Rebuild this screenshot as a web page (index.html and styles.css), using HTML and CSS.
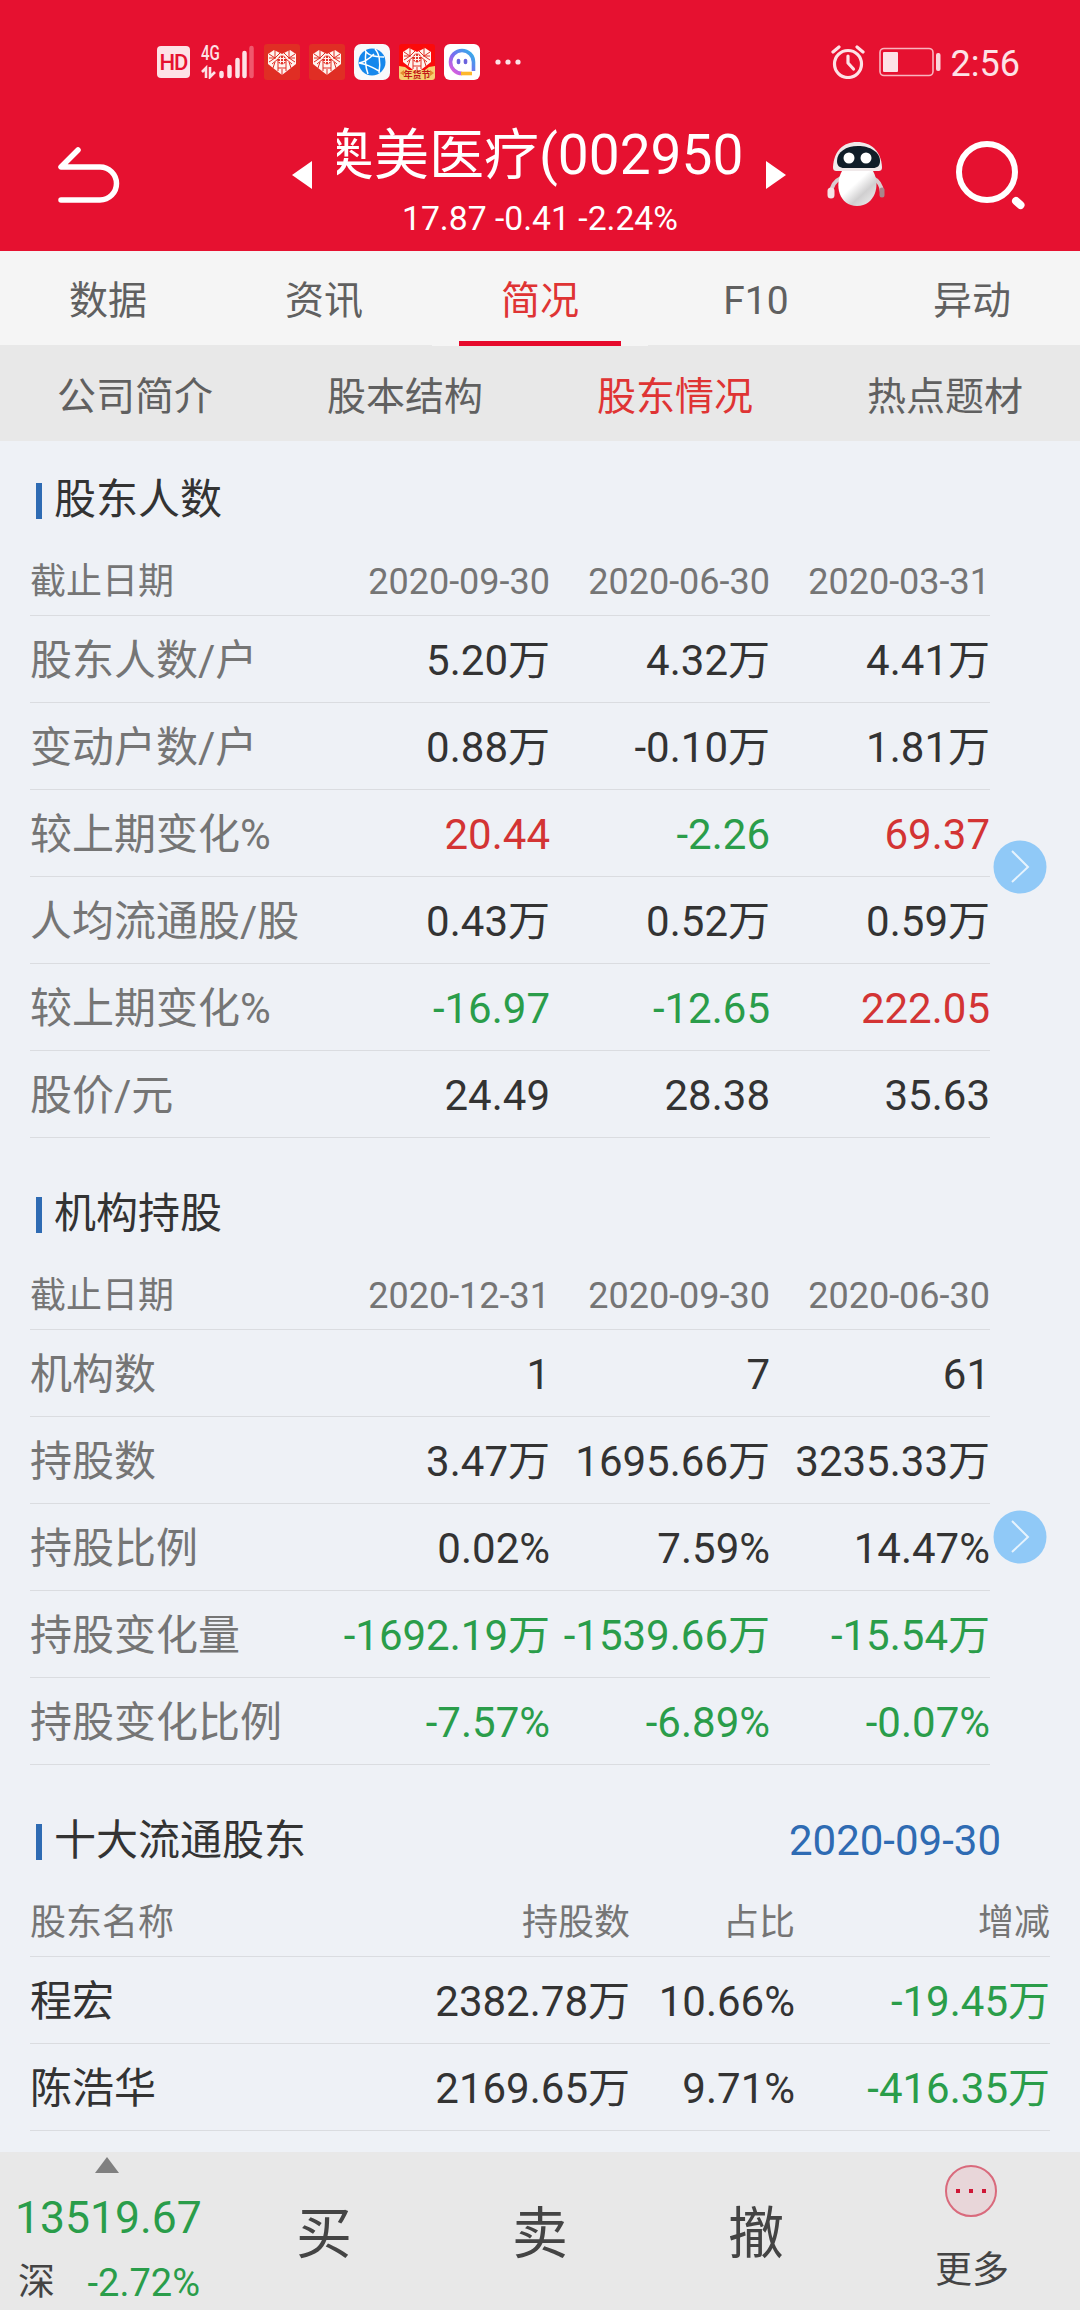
FILE: index.html
```html
<!DOCTYPE html>
<html lang="zh-CN">
<head>
    <meta charset="UTF-8">
    <meta name="viewport" content="width=device-width, initial-scale=1.0">
    <title>奥美医疗(002950)</title>
    <link rel="stylesheet" href="styles.css">
</head>
<body>

<svg class="defs" width="0" height="0">
    <symbol id="heart" viewBox="0 0 36 36">
        <path d="M18 31L4 20V10l6-4 8 4 8-4 6 4v10z" fill="#fff4ee"/>
        <path d="M5 10l6 4 5-5M11 5v9l-6 4M31 10l-6 4-5-5M25 5v9l6 4M8 20l6-5v12M28 20l-6-5v12M14 24h8M18 25v6M5 14h7M24 14h7M11 18l-2 6M25 18l2 6" fill="none" stroke="#e02e24" stroke-width="1"/>
        <circle cx="18" cy="16" r="4.4" fill="#e02e24"/>
        <path d="M14.5 14.5h7M14.5 17.5h7M16.5 12.5v7M19.5 12.5v7" stroke="#fff4ee" stroke-width="1.1"/>
    </symbol>
</svg>

<header>
    <div class="status-bar">
        <div class="status-left">
            <span class="hd">HD</span>
            <div class="signal">
                <span>4G</span>
                <svg width="54" height="34" viewBox="0 0 54 34">
                    <path d="M1 27l4-4v10M9 22v10l5-5" fill="none" stroke="#fde2e6" stroke-width="2.6"/>
                    <path d="M20.5 28v3M28.5 22v9M36.5 15v16M43.5 8v23" stroke="#fde2e6" stroke-width="4.5" stroke-linecap="round"/>
                    <path d="M50.5 3v28" stroke="#f0586d" stroke-width="4.5" stroke-linecap="round"/>
                </svg>
            </div>
            <svg class="app" width="36" height="36" viewBox="0 0 36 36">
                <rect width="36" height="36" rx="3" fill="#e02e24"/>
                <use href="#heart"/>
            </svg>
            <svg class="app" width="36" height="36" viewBox="0 0 36 36">
                <rect width="36" height="36" rx="3" fill="#e02e24"/>
                <use href="#heart"/>
            </svg>
            <svg class="app" width="36" height="36" viewBox="0 0 36 36">
                <rect width="36" height="36" rx="7" fill="#f8f9fb"/>
                <circle cx="18" cy="18" r="13.5" fill="#1587ec"/>
                <path d="M11 6c2 5 9 7 19 7M21 5c4 4 6 13 4 24M5 19c6-1 10-4 15-9M5 19c7 1 15 5 20 8M12 7c-1 7-1 15 2 23" fill="none" stroke="#fff" stroke-width="1.5"/>
            </svg>
            <svg class="app" width="36" height="36" viewBox="0 0 36 36">
                <rect width="36" height="36" rx="3" fill="#fb0a0a"/>
                <use href="#heart" y="-2"/>
                <path d="M0 22l6 1 4 3h16l4-3 6-1v11q0 3-3 3H3q-3 0-3-3z" fill="#f7cf72"/>
                <path d="M1 29l4-3v6zM35 29l-4-3v6z" fill="#e58b31"/>
                <text x="18" y="34" text-anchor="middle" class="app-tag">年货节</text>
            </svg>
            <svg class="app" width="36" height="36" viewBox="0 0 36 36">
                <defs>
                    <linearGradient id="ring" x1="0" y1="1" x2="1" y2="0">
                        <stop offset="0" stop-color="#f25bd8"/>
                        <stop offset=".45" stop-color="#7b6bf0"/>
                        <stop offset="1" stop-color="#29b6e8"/>
                    </linearGradient>
                </defs>
                <rect width="36" height="36" rx="6" fill="#fff"/>
                <path d="M18 29.5A11.5 11.5 0 1 1 29.5 18v9" fill="none" stroke="url(#ring)" stroke-width="3.6"/>
                <path d="M17 29.5h11" stroke="#fdb72c" stroke-width="3.6"/>
                <path d="M14.5 16.5v2M21.5 16.5v2" stroke="#6a62dd" stroke-width="3.6" stroke-linecap="round"/>
            </svg>
            <svg class="dots" width="26" height="6" viewBox="0 0 26 6">
                <circle cx="3" cy="3" r="2.6"/><circle cx="13" cy="3" r="2.6"/><circle cx="23" cy="3" r="2.6"/>
            </svg>
        </div>
        <div class="status-right">
            <svg width="34" height="34" viewBox="0 0 34 34" fill="none" stroke="#fde2e6" stroke-width="3.2">
                <circle cx="17" cy="19" r="13.5"/>
                <path d="M17 11v7l5.5 6" stroke-linecap="round" stroke-linejoin="round"/>
                <path d="M2 7l6-5M32 7l-6-5" stroke-linecap="round"/>
            </svg>
            <svg class="battery" width="62" height="30" viewBox="0 0 62 30">
                <rect x="1" y="1.5" width="53" height="27" rx="4" fill="none" stroke="#f9b5be" stroke-width="1.6"/>
                <rect x="4" y="5" width="15" height="20" rx="1" fill="#fde2e6"/>
                <rect x="57" y="6" width="4.5" height="18" rx="2" fill="#fcd5da"/>
            </svg>
            <span>2:56</span>
        </div>
    </div>
    <div class="title-bar">
        <svg class="back" width="64" height="60" viewBox="0 0 64 60">
            <path d="M21 5L4 22h39a16.5 16.5 0 0 1 0 33H4" fill="none" stroke="#fff" stroke-width="5.5" stroke-linecap="round" stroke-linejoin="round"/>
        </svg>
        <svg class="prev" width="20" height="28" viewBox="0 0 20 28"><path d="M20 0v28L0 14z" fill="#fff"/></svg>
        <div class="stock">
            <div class="stock-name"><span>奥美医疗(002950</span></div>
            <div class="stock-price">17.87 -0.41 -2.24%</div>
        </div>
        <svg class="next" width="20" height="28" viewBox="0 0 20 28"><path d="M0 0v28l20-14z" fill="#fff"/></svg>
        <svg class="robot" width="60" height="70" viewBox="0 0 60 70">
            <defs>
                <linearGradient id="robotBody" x1="0" y1="0" x2="1" y2="1">
                    <stop offset=".4" stop-color="#fff"/>
                    <stop offset=".65" stop-color="#d0cfd0"/>
                    <stop offset="1" stop-color="#f4f4f4"/>
                </linearGradient>
            </defs>
            <path d="M14 38Q5 42 4 53M46 38q8 4 9 14" fill="none" stroke="#d9cccf" stroke-width="4"/>
            <path d="M4 51v4" stroke="#f4e4e6" stroke-width="7" stroke-linecap="round"/>
            <path d="M55 50v5" stroke="#a9858b" stroke-width="5" stroke-linecap="round"/>
            <path d="M15 31h31c8 14 2 35-16 35S7 45 15 31z" fill="url(#robotBody)"/>
            <path d="M6 27C7 11 16 2 30 2s24 9 25 25c0 3-1 4-4 4H10c-3 0-4-1-4-4z" fill="#f0e9ea"/>
            <path d="M10 21c0-9 9-15 21-15s22 6 22 15c0 5-3 7-7 7H17c-4 0-7-2-7-7z" fill="#101d28"/>
            <circle cx="22" cy="18" r="5.5" fill="#fff"/>
            <circle cx="39" cy="18" r="5.5" fill="#fff"/>
        </svg>
        <svg class="search" width="70" height="70" viewBox="0 0 70 70" fill="none" stroke="#fff">
            <circle cx="31" cy="31" r="28" stroke-width="6"/>
            <path d="M60 60l4.5 4" stroke-width="8" stroke-linecap="round"/>
        </svg>
    </div>
</header>

<nav class="tabs">
    <a>数据</a>
    <a>资讯</a>
    <a class="active">简况</a>
    <a>F10</a>
    <a>异动</a>
</nav>

<nav class="sub-tabs">
    <a>公司简介</a>
    <a>股本结构</a>
    <a class="active">股东情况</a>
    <a>热点题材</a>
</nav>

<main>
    <section>
        <h2>股东人数</h2>
        <table>
            <tr><th>截止日期</th><th>2020-09-30</th><th>2020-06-30</th><th>2020-03-31</th></tr>
            <tr><td>股东人数/户</td><td>5.20万</td><td>4.32万</td><td>4.41万</td></tr>
            <tr><td>变动户数/户</td><td>0.88万</td><td>-0.10万</td><td>1.81万</td></tr>
            <tr><td>较上期变化%</td><td class="up">20.44</td><td class="down">-2.26</td><td class="up">69.37</td></tr>
            <tr><td>人均流通股/股</td><td>0.43万</td><td>0.52万</td><td>0.59万</td></tr>
            <tr><td>较上期变化%</td><td class="down">-16.97</td><td class="down">-12.65</td><td class="up">222.05</td></tr>
            <tr><td>股价/元</td><td>24.49</td><td>28.38</td><td>35.63</td></tr>
        </table>
        <svg class="more-arrow" width="54" height="54" viewBox="0 0 54 54">
            <circle cx="27" cy="27" r="26.5" fill="#90c9f7"/>
            <path d="M19 11l16 16-16 15" fill="none" stroke="#e6f3fd" stroke-width="2"/>
        </svg>
    </section>

    <section>
        <h2>机构持股</h2>
        <table>
            <tr><th>截止日期</th><th>2020-12-31</th><th>2020-09-30</th><th>2020-06-30</th></tr>
            <tr><td>机构数</td><td>1</td><td>7</td><td>61</td></tr>
            <tr><td>持股数</td><td>3.47万</td><td>1695.66万</td><td>3235.33万</td></tr>
            <tr><td>持股比例</td><td>0.02%</td><td>7.59%</td><td>14.47%</td></tr>
            <tr><td>持股变化量</td><td class="down">-1692.19万</td><td class="down">-1539.66万</td><td class="down">-15.54万</td></tr>
            <tr><td>持股变化比例</td><td class="down">-7.57%</td><td class="down">-6.89%</td><td class="down">-0.07%</td></tr>
        </table>
        <svg class="more-arrow" width="54" height="54" viewBox="0 0 54 54">
            <circle cx="27" cy="27" r="26.5" fill="#90c9f7"/>
            <path d="M19 11l16 16-16 15" fill="none" stroke="#e6f3fd" stroke-width="2"/>
        </svg>
    </section>

    <section class="top-holders">
        <h2>十大流通股东 <span class="date">2020-09-30</span></h2>
        <table class="holders">
            <tr><th>股东名称</th><th>持股数</th><th>占比</th><th>增减</th></tr>
            <tr><td>程宏</td><td>2382.78万</td><td>10.66%</td><td class="down">-19.45万</td></tr>
            <tr><td>陈浩华</td><td>2169.65万</td><td>9.71%</td><td class="down">-416.35万</td></tr>
        </table>
    </section>
</main>

<footer>
    <div class="index">
        <svg width="24" height="16" viewBox="0 0 24 16"><path d="M12 0l12 16H0z" fill="#808080"/></svg>
        <div class="index-value">13519.67</div>
        <div class="index-change"><span>深</span><span class="down">-2.72%</span></div>
    </div>
    <a>买</a>
    <a>卖</a>
    <a>撤</a>
    <div class="more">
        <svg width="54" height="54" viewBox="0 0 54 54">
            <circle cx="26" cy="27" r="25" fill="#e8d6d9" stroke="#d96a7c" stroke-width="2"/>
            <path d="M11 25h4v4h-4zM24 25h4v4h-4zM37 25h4v4h-4z" fill="#cf1736"/>
        </svg>
        <span>更多</span>
    </div>
</footer>

</body>
</html>
```
FILE: styles.css
```css
* {
    box-sizing: border-box;
}
body {
    font-family: Roboto, "Noto Sans CJK SC", sans-serif;
    background-color: #eef1f6;
    color: #333;
    margin: 0;
    height: 2310px;
    display: flex;
    flex-direction: column;
    overflow: hidden;
}
svg {
    display: block;
    flex: none;
}
.defs {
    position: absolute;
}
header {
    background-color: #e61130;
    color: white;
    height: 251px;
}
.status-bar {
    height: 96px;
    padding: 28px 60px 0 157px;
    display: flex;
    justify-content: space-between;
    align-items: center;
}
.status-left, .status-right {
    display: flex;
    align-items: center;
}
.hd {
    width: 33px;
    height: 32px;
    border-radius: 4px;
    background-color: #fde2e6;
    color: #e61130;
    font-size: 22px;
    font-weight: 500;
    line-height: 33px;
    text-align: center;
    letter-spacing: -1px;
}
.signal {
    position: relative;
    margin: 0 9px 0 11px;
}
.signal span {
    position: absolute;
    left: 0;
    top: 0;
    font-size: 21px;
    font-weight: 500;
    line-height: 16px;
    color: #fde2e6;
    transform: scaleX(0.72);
    transform-origin: left;
}
.app {
    margin-right: 9px;
}
.app-tag {
    font-size: 9px;
    font-weight: bold;
    fill: #c01818;
}
.dots {
    margin-left: 6px;
    fill: #fde2e6;
}
.status-right span {
    font-size: 36px;
    line-height: 40px;
    color: #fde2e6;
    padding-top: 3px;
}
.battery {
    margin: 0 10px 0 14px;
}
.title-bar {
    height: 155px;
    padding-left: 57px;
    display: flex;
    align-items: flex-start;
}
.back {
    margin-top: 49px;
}
.prev {
    margin: 65px 0 0 171px;
}
.next {
    margin: 65px 0 0 23px;
}
.stock {
    width: 406px;
    margin-left: 25px;
    text-align: center;
}
.stock-name {
    height: 94px;
    padding-top: 20px;
    font-size: 55px;
    line-height: 78px;
    overflow: hidden;
    white-space: nowrap;
    text-align: left;
}
.stock-name span {
    margin-left: -18px;
}
.stock-price {
    font-size: 33.7px;
    line-height: 40px;
    margin-top: 9px;
}
.robot {
    margin: 44px 0 0 41px;
}
.search {
    margin: 45px 0 0 69px;
}
.tabs, .sub-tabs {
    display: flex;
    font-size: 39px;
    color: #606060;
}
.tabs a, .sub-tabs a {
    flex: 1;
    text-align: center;
}
.tabs {
    position: relative;
    height: 94px;
    line-height: 100px;
    background-color: #f5f5f5;
}
.tabs .active {
    height: 95px;
    background: linear-gradient(#e60a2c, #e60a2c) center bottom / 162px 5px no-repeat #f5f5f5;
}
.sub-tabs {
    height: 96px;
    line-height: 104px;
    background-color: #e8e8e8;
}
.active {
    color: #df3434;
}
main {
    flex: 1;
    padding: 0 30px;
}
section {
    position: relative;
    height: 714px;
}
section + section {
    height: 627px;
}
section.top-holders {
    height: auto;
}
h2 {
    margin: 0;
    height: 114px;
    padding: 31px 49px 0 24px;
    display: flex;
    justify-content: space-between;
    font-size: 42px;
    font-weight: normal;
    line-height: 56px;
}
h2::before {
    content: "";
    position: absolute;
    left: 6px;
    top: 42px;
    width: 6px;
    height: 36px;
    background-color: #2e6bb3;
}
.date {
    color: #2e6bb3;
}
table {
    width: 960px;
    table-layout: fixed;
    border-collapse: separate;
    border-spacing: 0;
}
th, td {
    width: 220px;
    height: 87px;
    padding: 3px 0 0;
    border-bottom: 1px solid #dadce0;
    font-size: 42px;
    line-height: 60px;
    text-align: right;
    white-space: nowrap;
}
th {
    height: 61px;
    padding: 0 0 6px;
    font-size: 36px;
    line-height: 50px;
    font-weight: normal;
    color: #757575;
}
th:first-child, td:first-child {
    width: 300px;
    text-align: left;
    color: #757575;
}
.holders {
    width: 1020px;
}
.holders td:first-child {
    color: #333;
}
.holders th:nth-child(2) {
    width: 300px;
}
.holders th:nth-child(3) {
    width: 165px;
}
.holders th:nth-child(4) {
    width: 255px;
}
.up {
    color: #d33434;
}
.down {
    color: #2a9d4a;
}
/* scroll hint at the right edge of the table */
.more-arrow {
    position: absolute;
    left: 963px;
    top: 399px;
}
section + section .more-arrow {
    top: 355px;
}
footer {
    flex: none;
    height: 158px;
    background-color: #e8e8e8;
    color: #444;
    display: flex;
}
footer > * {
    width: 216px;
}
footer > a {
    font-size: 56px;
    line-height: 164px;
    text-align: center;
}
.index svg {
    margin: 5px 0 0 95px;
}
.index-value {
    margin: 19px 0 0 15px;
    font-size: 44.5px;
    line-height: 52px;
    color: #2a9d4a;
}
.index-change {
    width: 182px;
    margin: 12px 0 0 18px;
    display: flex;
    justify-content: space-between;
    font-size: 38px;
    line-height: 54px;
}
.index-change span:first-child {
    font-size: 37px;
}
.more {
    display: flex;
    flex-direction: column;
    align-items: center;
    font-size: 37px;
    line-height: 52px;
}
.more svg {
    margin: 12px 0 27px;
}
```
